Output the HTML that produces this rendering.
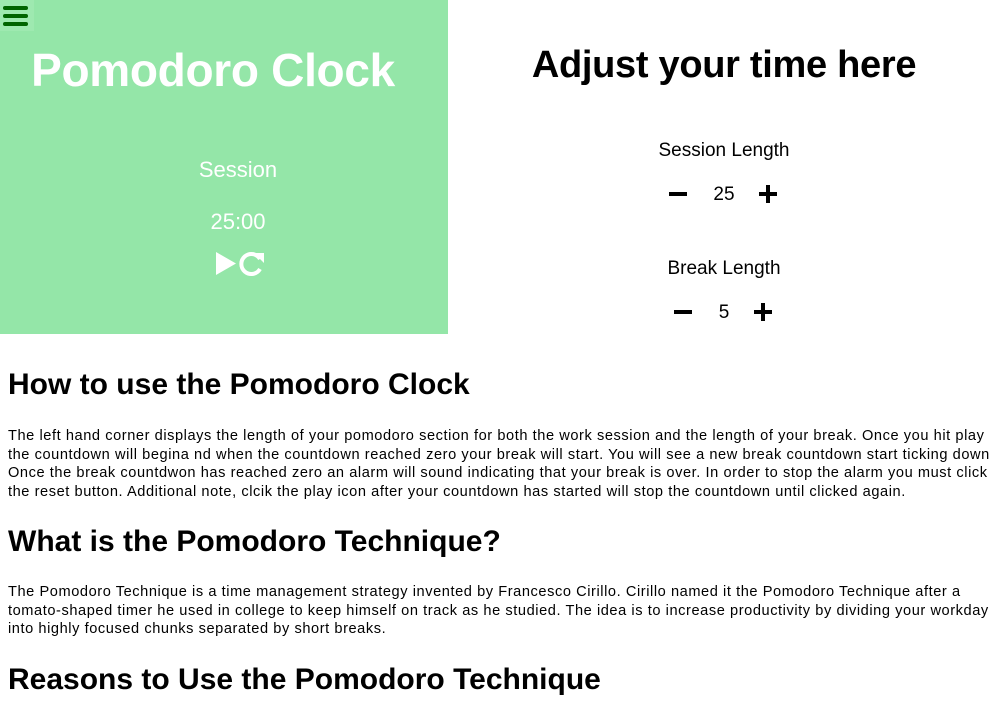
<!DOCTYPE html>
<html><head><meta charset="utf-8"><style>
body{margin:0;width:1003px;height:721px;overflow:hidden;background:#fff;font-family:"Liberation Sans",Arial,sans-serif;color:#000;position:relative}
.a{position:absolute;white-space:nowrap}
#g{position:absolute;left:0;top:0;width:448px;height:334px;background:#94e6a8}
#hb{position:absolute;left:0;top:0;width:34px;height:31px;background:#9ee9b0}
#hb i{position:absolute;left:3px;width:25px;height:4px;border-radius:2px;background:#006400}
.c{transform:translateX(-50%)}
p.t{position:absolute;left:8px;margin:0;font-size:14.6px;line-height:18.7px;white-space:nowrap;letter-spacing:0.57px}
h2{position:absolute;left:8px;margin:0;font-size:30px;font-weight:bold;white-space:nowrap;letter-spacing:0px}
</style></head><body>
<div id="g">
<div id="hb"><i style="top:6px"></i><i style="top:14px"></i><i style="top:22px"></i></div>
<div class="a c" style="left:213px;top:43px;font-size:46px;font-weight:bold;color:#fff;letter-spacing:-0.3px">Pomodoro Clock</div>
<div class="a c" style="left:238px;top:157px;font-size:22px;color:#fff">Session</div>
<div class="a c" style="left:238px;top:209px;font-size:22px;color:#fff">25:00</div>
<svg class="a" style="left:214px;top:251px" width="52" height="26" viewBox="0 0 52 26">
<path d="M2 1 L22 12.5 L2 24 Z" fill="#fff"/>
<path d="M46 8 A10 10 0 1 0 46 18" fill="none" stroke="#fff" stroke-width="4"/>
<path d="M40 2 L50 2 L50 12 Z" fill="#fff"/>
</svg>
</div>
<div class="a c" style="left:724px;top:44px;font-size:38px;font-weight:bold;letter-spacing:-0.3px">Adjust your time here</div>
<div class="a c" style="left:724px;top:140px;font-size:19px">Session Length</div>
<div class="a" style="left:669px;top:192px;width:18px;height:4px;background:#000"></div>
<div class="a c" style="left:724px;top:184px;font-size:19px">25</div>
<div class="a" style="left:759px;top:192px;width:18px;height:4px;background:#000"></div>
<div class="a" style="left:766px;top:185px;width:4px;height:18px;background:#000"></div>
<div class="a c" style="left:724px;top:258px;font-size:19px">Break Length</div>
<div class="a" style="left:674px;top:310px;width:18px;height:4px;background:#000"></div>
<div class="a c" style="left:724px;top:302px;font-size:19px">5</div>
<div class="a" style="left:754px;top:310px;width:18px;height:4px;background:#000"></div>
<div class="a" style="left:761px;top:303px;width:4px;height:18px;background:#000"></div>
<h2 style="top:368px">How to use the Pomodoro Clock</h2>
<p class="t" style="top:427px">The left hand corner displays the length of your pomodoro section for both the work session and the length of your break. Once you hit play<br>the countdown will begina nd when the countdown reached zero your break will start. You will see a new break countdown start ticking down<br>Once the break countdwon has reached zero an alarm will sound indicating that your break is over. In order to stop the alarm you must click<br>the reset button. Additional note, clcik the play icon after your countdown has started will stop the countdown until clicked again.</p>
<h2 style="top:525px">What is the Pomodoro Technique?</h2>
<p class="t" style="top:583px">The Pomodoro Technique is a time management strategy invented by Francesco Cirillo. Cirillo named it the Pomodoro Technique after a<br>tomato-shaped timer he used in college to keep himself on track as he studied. The idea is to increase productivity by dividing your workday<br>into highly focused chunks separated by short breaks.</p>
<h2 style="top:663px">Reasons to Use the Pomodoro Technique</h2>
</body></html>
